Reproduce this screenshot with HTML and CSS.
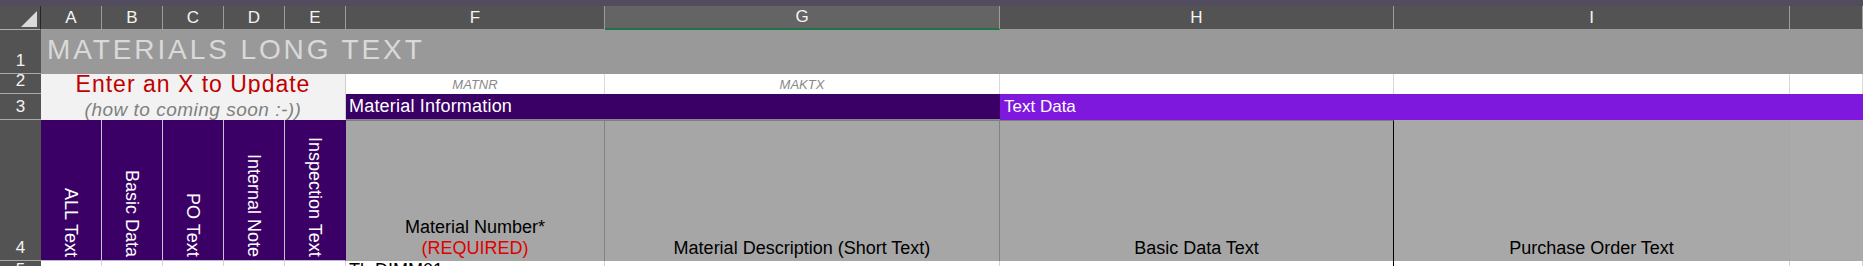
FILE: index.html
```html
<!DOCTYPE html>
<html lang="en">
<head>
    <meta charset="UTF-8">
    <title>Materials Long Text</title>
    <link rel="stylesheet" href="styles.css">
</head>
<body>
    <div class="window-band"></div>
    <div class="sheet">
        <div class="hd corner"><span class="corner-tri"></span></div>
        <div class="hd">A</div>
        <div class="hd">B</div>
        <div class="hd">C</div>
        <div class="hd">D</div>
        <div class="hd">E</div>
        <div class="hd">F</div>
        <div class="hd selected">G</div>
        <div class="hd">H</div>
        <div class="hd">I</div>
        <div class="hd"></div>

        <div class="rh">1</div>
        <div class="title">MATERIALS LONG TEXT</div>

        <div class="rh">2</div>
        <div class="note note-main">Enter an X to Update</div>
        <div class="cell tech">MATNR</div>
        <div class="cell tech">MAKTX</div>
        <div class="cell"></div>
        <div class="cell"></div>
        <div class="cell"></div>

        <div class="rh">3</div>
        <div class="note note-sub">(how to coming soon :-))</div>
        <div class="group group-mat">Material Information</div>
        <div class="group group-text">Text Data</div>

        <div class="rh">4</div>
        <div class="flag"><span>ALL Text</span></div>
        <div class="flag"><span>Basic Data</span></div>
        <div class="flag"><span>PO Text</span></div>
        <div class="flag"><span>Internal Note</span></div>
        <div class="flag"><span>Inspection Text</span></div>
        <div class="field">Material Number*<span class="req">(REQUIRED)</span></div>
        <div class="field">Material Description (Short Text)</div>
        <div class="field field-dark">Basic Data Text</div>
        <div class="field field-open">Purchase Order Text</div>
        <div class="field field-open"></div>

        <div class="rh rh-last">5</div>
        <div class="cell row5"></div>
        <div class="cell row5"></div>
        <div class="cell row5"></div>
        <div class="cell row5"></div>
        <div class="cell row5"></div>
        <div class="cell row5 value">Tk-DIMM01</div>
        <div class="cell row5"></div>
        <div class="cell row5 field-dark"></div>
        <div class="cell row5"></div>
        <div class="cell row5"></div>
    </div>
</body>
</html>
```

FILE: styles.css
```css
* {
    box-sizing: border-box;
}
body {
    margin: 0;
    background: #ffffff;
    font-family: 'Liberation Sans', Arial, sans-serif;
    overflow: hidden;
}
.window-band {
    height: 6px;
    background-color: #534b5e;
}
.sheet {
    display: grid;
    grid-template-columns: 41px 61px 61px 61px 61px 61px 259px 395px 394px 396px 1fr;
    grid-template-rows: 24px 44px 20px 26px 141px 20px;
}

/* column + row headers */
.hd {
    background-color: #535353;
    color: #f4f4f4;
    font-size: 17px;
    display: flex;
    align-items: center;
    justify-content: center;
    border-right: 1px solid #9c9c9c;
    border-bottom: 1px solid #9c9c9c;
}
.hd.selected {
    background-color: #646464;
    border-bottom: 2px solid #217346;
}
.corner {
    justify-content: flex-end;
    align-items: flex-end;
    padding: 0 3px 2px 0;
    border-right: 1px solid #262626;
    border-bottom: 1px solid #b0b0b0;
}
.corner-tri {
    width: 16px;
    height: 16px;
    background-color: #dadada;
    clip-path: polygon(100% 0, 100% 100%, 0 100%);
}
.rh {
    background-color: #535353;
    color: #f4f4f4;
    font-size: 17px;
    display: flex;
    align-items: flex-end;
    justify-content: center;
    padding-bottom: 2px;
    border-bottom: 1px solid #a8a8a8;
}
.rh-last {
    border-bottom: none;
    align-items: flex-start;
    padding: 0;
    line-height: 18px;
}

/* row 1 */
.title {
    grid-column: 2 / -1;
    background-color: #999999;
    color: #d9d9d9;
    font-size: 28px;
    letter-spacing: 2.9px;
    display: flex;
    align-items: center;
    padding: 0 0 5px 6px;
}

/* rows 2-3 */
.cell {
    background-color: #ffffff;
    border-right: 1px solid #d9d9d9;
}
.tech {
    color: #8a8a8a;
    font-size: 13px;
    font-style: italic;
    display: flex;
    align-items: center;
    justify-content: center;
}
.note {
    grid-column: 2 / 7;
    background-color: #f2f2f2;
    text-align: center;
    border-right: 1px solid #cfcfcf;
}
.note-main {
    color: #c00000;
    font-size: 23px;
    letter-spacing: 1px;
    line-height: 20px;
}
.note-sub {
    color: #808080;
    font-size: 19px;
    font-style: italic;
    letter-spacing: 0.5px;
    line-height: 24px;
    padding-top: 4px;
    overflow: hidden;
}
.group {
    color: #ffffff;
    font-size: 18px;
    display: flex;
    align-items: center;
    padding-left: 2px;
}
.group-mat {
    grid-column: 7 / 9;
    background-color: #3a0066;
    border-bottom: 1px solid #8a8a8a;
    letter-spacing: 0.2px;
    padding-left: 3px;
}
.group-text {
    grid-column: 9 / -1;
    background-color: #7e18dd;
    font-size: 17px;
    padding-left: 4px;
}

/* row 4 */
.flag {
    background-color: #3a0066;
    color: #ffffff;
    font-size: 18px;
    display: flex;
    justify-content: center;
    align-items: flex-end;
    padding-bottom: 3px;
    border-right: 1px solid #c6c6d2;
    border-bottom: 1px solid #b9b9d6;
}
.flag span {
    writing-mode: vertical-rl;
    line-height: 20px;
}
.flag:nth-of-type(5n) {
    border-right-color: #3a0066;
}
.field {
    background-color: #a6a6a6;
    color: #000000;
    font-size: 18px;
    line-height: 21px;
    display: flex;
    flex-direction: column;
    justify-content: flex-end;
    align-items: center;
    padding-bottom: 2px;
    border-right: 1px solid #828282;
    border-top: 1px solid #7e7e7e;
}
.field-dark {
    border-right: 1px solid #000000;
}
.field-open {
    border-top: none;
    border-right: 1px solid #a6a6a6;
    background-color: #a8a8a8;
}
.field-open:last-child, .field-open + .field-open {
    background-color: #aaaaaa;
    border-right: none;
}
.req {
    color: #e00000;
}

/* row 5 */
.row5 {
    border-right: 1px solid #d4d4d4;
}
.row5.field-dark {
    border-right: 1px solid #000000;
}
.value {
    font-size: 18px;
    line-height: 18px;
    padding-left: 3px;
    overflow: hidden;
}
```
